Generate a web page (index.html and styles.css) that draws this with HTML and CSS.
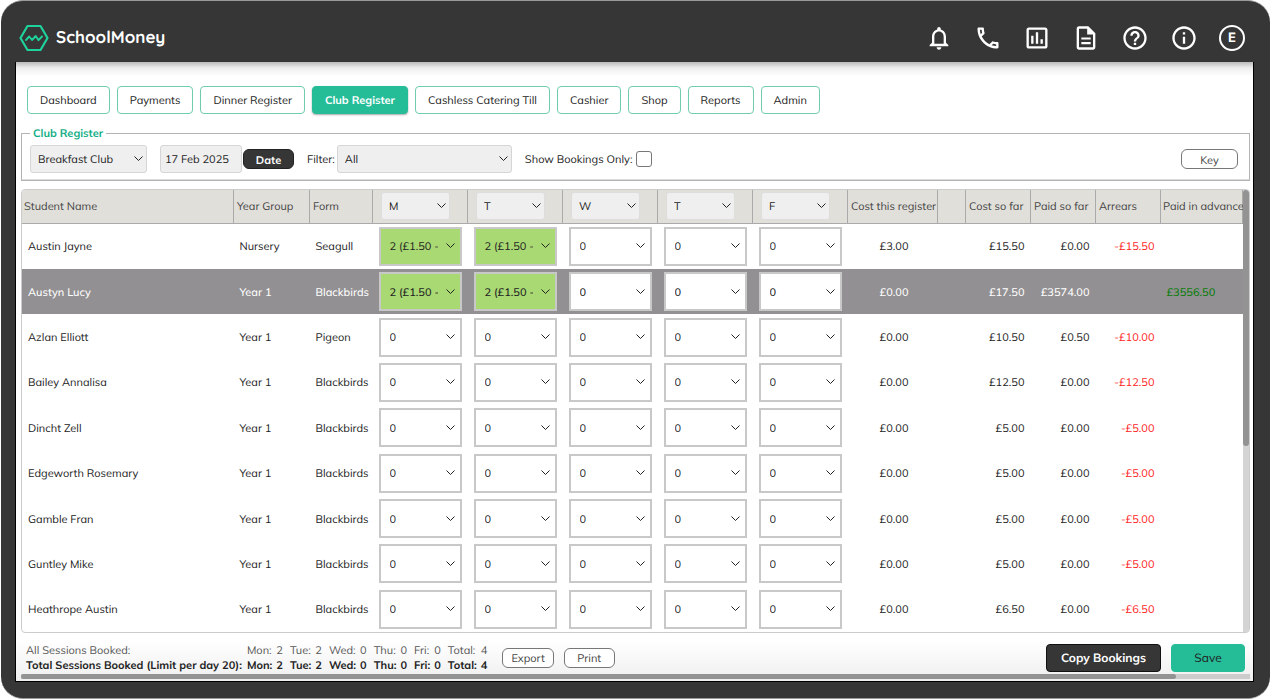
FILE: index.html
```html
<!DOCTYPE html>
<html lang="en">
<head>
    <meta charset="UTF-8">
    <meta name="viewport" content="width=device-width, initial-scale=1.0">
    <title>SchoolMoney - Club Register</title>
    <link rel="stylesheet" href="styles.css">
</head>
<body>
    <div class="frame">
        <header class="topbar">
            <a class="brand" href="#">
                <svg class="brand-logo" viewBox="0 0 30 28" fill="none" stroke="#1fd19b" stroke-linejoin="round" stroke-linecap="round">
                    <path stroke-width="2.2" d="M8.500 2h13l7 12-7 12h-13l-7-12z"/>
                    <path stroke-width="1.900" d="M7 16l3.200-3.500 2.800 3.500 3.700-4 2.800 4.200 3.500-3.700"/>
                </svg>
                <span>SchoolMoney</span>
            </a>
            <nav class="tools" aria-label="Tools">
                <a href="#" aria-label="Notifications">
                    <svg viewBox="0 0 24 24"><path d="M12 22c1.100 0 2-.9 2-2h-4c0 1.100.9 2 2 2zm6-6v-5c0-3.070-1.630-5.640-4.500-6.320V4c0-.83-.67-1.500-1.500-1.500s-1.500.67-1.500 1.500v.68C7.640 5.360 6 7.920 6 11v5l-2 2v1h16v-1l-2-2zm-2 1H8v-6c0-2.480 1.510-4.500 4-4.500s4 2.020 4 4.500v6z"/></svg>
                </a>
                <a href="#" aria-label="Phone">
                    <svg viewBox="0 0 24 24"><path d="M6.540 5c.06.89.21 1.760.45 2.590l-1.200 1.200c-.41-1.200-.67-2.470-.76-3.790h1.510m9.860 12.020c.85.24 1.720.39 2.600.45v1.490c-1.320-.09-2.590-.35-3.800-.75l1.200-1.190M7.500 3H4c-.55 0-1 .45-1 1 0 9.390 7.610 17 17 17 .55 0 1-.45 1-1v-3.490c0-.55-.45-1-1-1-1.240 0-2.450-.2-3.570-.57-.1-.04-.21-.05-.31-.05-.26 0-.51.1-.71.29l-2.200 2.200c-2.830-1.450-5.150-3.760-6.590-6.590l2.200-2.200c.28-.28.36-.67.25-1.020C8.700 6.450 8.500 5.250 8.500 4c0-.55-.45-1-1-1z"/></svg>
                </a>
                <a href="#" aria-label="Statistics">
                    <svg viewBox="0 0 24 24"><path d="M19 3H5c-1.100 0-2 .9-2 2v14c0 1.100.9 2 2 2h14c1.100 0 2-.9 2-2V5c0-1.100-.9-2-2-2zm0 16H5V5h14v14zM7 10h2v7H7zm4-3h2v10h-2zm4 6h2v4h-2z"/></svg>
                </a>
                <a href="#" aria-label="Documents">
                    <svg viewBox="0 0 24 24"><path d="M14 2H6c-1.100 0-2 .9-2 2v16c0 1.100.9 2 2 2h12c1.100 0 2-.9 2-2V8l-6-6zM6 20V4h7v5h5v11H6zM8 11.500h8v1.800H8zM8 15.500h8v1.800H8z"/></svg>
                </a>
                <a href="#" aria-label="Help">
                    <svg viewBox="0 0 24 24"><path d="M11 18h2v-2h-2v2zm1-16C6.480 2 2 6.480 2 12s4.480 10 10 10 10-4.480 10-10S17.520 2 12 2zm0 18c-4.410 0-8-3.590-8-8s3.590-8 8-8 8 3.590 8 8-3.590 8-8 8zm0-14c-2.210 0-4 1.790-4 4h2c0-1.100.9-2 2-2s2 .9 2 2c0 2-3 1.750-3 5h2c0-2.250 3-2.500 3-5 0-2.210-1.790-4-4-4z"/></svg>
                </a>
                <a href="#" aria-label="Information">
                    <svg viewBox="0 0 24 24"><path d="M11 7h2v2h-2zm0 4h2v6h-2zm1-9C6.480 2 2 6.480 2 12s4.480 10 10 10 10-4.480 10-10S17.520 2 12 2zm0 18c-4.410 0-8-3.590-8-8s3.590-8 8-8 8 3.590 8 8-3.590 8-8 8z"/></svg>
                </a>
                <a class="avatar" href="#">E</a>
            </nav>
        </header>

        <main class="page">
            <nav class="tabs" aria-label="Main">
                <a class="tab" href="#">Dashboard</a>
                <a class="tab" href="#">Payments</a>
                <a class="tab" href="#">Dinner Register</a>
                <a class="tab active" href="#">Club Register</a>
                <a class="tab" href="#">Cashless Catering Till</a>
                <a class="tab" href="#">Cashier</a>
                <a class="tab" href="#">Shop</a>
                <a class="tab" href="#">Reports</a>
                <a class="tab" href="#">Admin</a>
            </nav>

            <fieldset class="filters">
                <legend>Club Register</legend>
                <div class="filter-row">
                    <select class="select club" aria-label="Club"><option>Breakfast Club</option></select>
                    <div class="date-group">
                        <input class="date" type="text" aria-label="Register date" value="17 Feb 2025">
                        <button class="pill dark" type="button">Date</button>
                    </div>
                    <div class="filter-group">
                        <label for="filter">Filter:</label>
                        <select class="select filter" id="filter"><option>All</option></select>
                    </div>
                    <div class="check-group">
                        <label for="bookings-only">Show Bookings Only:</label>
                        <input class="check" type="checkbox" id="bookings-only">
                    </div>
                    <button class="pill key" type="button">Key</button>
                </div>
            </fieldset>

            <div class="register">
                <table class="register-table">
                    <colgroup>
                        <col>
                        <col class="col-year">
                        <col class="col-form">
                        <col class="col-day" span="5">
                        <col class="col-cost">
                        <col class="col-blank">
                        <col class="col-money" span="3">
                        <col class="col-advance">
                    </colgroup>
                    <thead>
                        <tr>
                            <th>Student Name</th>
                            <th>Year Group</th>
                            <th>Form</th>
                            <th class="day"><select class="select" aria-label="Monday"><option>M</option></select></th>
                            <th class="day"><select class="select" aria-label="Tuesday"><option>T</option></select></th>
                            <th class="day"><select class="select" aria-label="Wednesday"><option>W</option></select></th>
                            <th class="day"><select class="select" aria-label="Thursday"><option>T</option></select></th>
                            <th class="day"><select class="select" aria-label="Friday"><option>F</option></select></th>
                            <th>Cost this register</th>
                            <th></th>
                            <th>Cost so far</th>
                            <th>Paid so far</th>
                            <th>Arrears</th>
                            <th>Paid in advance</th>
                        </tr>
                    </thead>
                    <tbody id="students"></tbody>
                </table>
                <div class="scroll-y"><div class="thumb"></div></div>
            </div>

            <footer class="summary">
                <table class="sessions">
                    <tr>
                        <th>All Sessions Booked:</th>
                        <td>Mon:</td><td>2</td>
                        <td>Tue:</td><td>2</td>
                        <td>Wed:</td><td>0</td>
                        <td>Thu:</td><td>0</td>
                        <td>Fri:</td><td>0</td>
                        <td>Total:</td><td>4</td>
                    </tr>
                    <tr class="total">
                        <th>Total Sessions Booked (Limit per day 20):</th>
                        <td>Mon:</td><td>2</td>
                        <td>Tue:</td><td>2</td>
                        <td>Wed:</td><td>0</td>
                        <td>Thu:</td><td>0</td>
                        <td>Fri:</td><td>0</td>
                        <td>Total:</td><td>4</td>
                    </tr>
                </table>
                <button class="pill" type="button">Export</button>
                <button class="pill" type="button">Print</button>
                <div class="actions">
                    <button class="action dark" type="button">Copy Bookings</button>
                    <button class="action save" type="button">Save</button>
                </div>
            </footer>
            <div class="scroll-x"><div class="thumb"></div></div>
        </main>
    </div>

    <script src="script.js"></script>
</body>
</html>
```

FILE: styles.css
```css
* {
    box-sizing: border-box;
}

body {
    margin: 0;
    background-color: #fff;
    color: #222;
    font-family: Mulish, Muli, "Open Sans", sans-serif;
    font-size: 11px;
    line-height: 14px;
    text-rendering: geometricPrecision;
}

button,
input,
select {
    margin: 0;
    font: inherit;
    color: inherit;
    text-rendering: inherit;
}

a {
    color: inherit;
    text-decoration: none;
}

/* Frame */
.frame {
    display: flex;
    flex-direction: column;
    height: calc(100vh - 1px);
    margin: 0 1px;
    padding: 0 16px 16px 14px;
    border: 1px solid #999;
    border-width: 1px 0 1px 0;
    border-radius: 22px;
    background-color: #363636;
}

.topbar {
    display: flex;
    justify-content: space-between;
    align-items: center;
    height: 61px;
    padding: 13px 9px 0 4px;
    color: #fff;
}

.brand {
    display: flex;
    align-items: center;
    gap: 7px;
    font-family: Quicksand, Lato, sans-serif;
    font-size: 17px;
    font-weight: 700;
    line-height: 24px;
}

.brand-logo {
    width: 30px;
    height: 28px;
}

.tools {
    display: flex;
    align-items: center;
    gap: 21px;
}

.tools svg {
    display: block;
    width: 28px;
    height: 28px;
    fill: #fff;
}

.avatar {
    width: 26px;
    height: 26px;
    border: 2px solid #fff;
    border-radius: 50%;
    font-family: Inter, sans-serif;
    font-size: 13px;
    font-weight: 700;
    line-height: 22px;
    text-align: center;
}

.page {
    display: flex;
    flex-direction: column;
    flex: 1;
    min-height: 0;
    padding: 24px 3px 2px 5px;
    border: 1px solid #000;
    border-top: none;
    background: linear-gradient(#bbb 0, #eee 6px, #fff 14px, #fff calc(100% - 40px), #efefef);
}

/* Tabs */
.tabs {
    display: flex;
    gap: 7px;
    padding-left: 6px;
}

.tab {
    padding: 6px 12px;
    border: 1px solid #6fcdae;
    border-radius: 4px;
    background-color: #fff;
}

.tab.active {
    border-color: #24bd98;
    background-color: #24bd98;
    box-shadow: 0 1px 2px rgba(0, 0, 0, 0.35);
    color: #fff;
    font-weight: 700;
}

/* Filters */
.filters {
    min-width: 0;
    margin: 12px 0 0;
    padding: 0 11px 7px 8px;
    border: 1px solid #b4b4b4;
    box-shadow: inset 0 -1px 0 #ddd;
}

.filters legend {
    padding: 0 3px;
    color: #14ae87;
    font-weight: 700;
}

.filter-row {
    display: flex;
    align-items: center;
    gap: 13px;
    padding-top: 5px;
}

.select {
    height: 28px;
    padding: 0 22px 0 7px;
    border: 1px solid #d6d6d6;
    border-radius: 3px;
    appearance: none;
    background: #efefef url("data:image/svg+xml,%3Csvg xmlns='http://www.w3.org/2000/svg' width='9' height='6' fill='none' stroke='%23222'%3E%3Cpath d='M.5.500 4.500 4.500 8.500.5'/%3E%3C/svg%3E") no-repeat right 3px center;
}

.select.club {
    width: 117px;
}

.select.filter {
    width: 175px;
}

.date-group,
.filter-group,
.check-group {
    display: flex;
    align-items: center;
}

.date-group {
    gap: 1px;
}

.filter-group {
    gap: 2px;
}

.check-group {
    gap: 4px;
}

.date {
    width: 82px;
    height: 28px;
    padding: 0 4px;
    border: 1px solid #d6d6d6;
    border-radius: 3px;
    background-color: #efefef;
}

.check {
    width: 16px;
    height: 16px;
    border: 1px solid #777;
    border-radius: 3px;
    appearance: none;
    background-color: #fff;
}

.pill {
    min-width: 51px;
    height: 20px;
    padding: 1px 8px 0;
    border: 1px solid #777;
    border-radius: 6px;
    background-color: #fff;
    color: #444;
}

.pill.dark {
    border-color: #222;
    background-color: #363636;
    color: #fff;
    font-weight: 700;
}

.pill.key {
    min-width: 57px;
    margin-left: auto;
}

/* Register */
.register {
    display: flex;
    flex: 1;
    min-height: 0;
    margin-top: 8px;
    border: 1px solid #ccc;
    border-radius: 4px;
    overflow: hidden;
    background-color: #fff;
}

.register-table {
    width: 100%;
    height: 100%;
    border-collapse: collapse;
    table-layout: fixed;
}

.col-year {
    width: 76px;
}

.col-form {
    width: 63px;
}

.col-day {
    width: 95px;
}

.col-cost {
    width: 90px;
}

.col-blank {
    width: 28px;
}

.col-money {
    width: 65px;
}

.col-advance {
    width: 82px;
}

.register-table th {
    height: 33px;
    padding: 0 0 0 3px;
    border-right: 1px solid #aaa;
    border-bottom: 1px solid #aaa;
    background-color: #e1dfda;
    color: #444;
    font-weight: 400;
    text-align: left;
    white-space: nowrap;
}

.register-table th:first-child,
.register-table th:last-child {
    padding-left: 2px;
}

.register-table th.day {
    padding-left: 8px;
}

.day .select {
    width: 69px;
    border-color: #ddd;
    color: #222;
}

.register-table td {
    padding: 0 6px;
    white-space: nowrap;
}

.register-table td.money {
    text-align: right;
}

.register-table td.cost,
.register-table td.advance {
    padding-right: 29px;
}

.booking {
    display: block;
    width: 83px;
    height: 39px;
    padding: 0 22px 0 9px;
    border: 2px solid #c8c8c8;
    border-radius: 0;
    background-color: #fff;
    background-position: right 5px center;
    color: #222;
}

.booking.booked {
    background-color: #a9d973;
}

.selected td {
    background-color: #929092;
    color: #fff;
    font-weight: 500;
}

.register-table .owed {
    color: #f22;
}

.register-table .credit {
    color: #0a7d0a;
}

/* Scrollbars */
.scroll-y {
    flex: none;
    width: 6px;
    background-color: #d4d4d4;
}

.scroll-y .thumb {
    height: 58%;
    border-radius: 3px;
    background-color: #939393;
}

.scroll-x {
    height: 5px;
    background-color: #ccc;
}

.scroll-x .thumb {
    width: 94%;
    height: 5px;
    border-radius: 3px;
    background-color: #939393;
}

/* Summary */
.summary {
    display: flex;
    align-items: center;
    gap: 10px;
    height: 41px;
    padding: 8px 5px 0;
}

.sessions {
    border-collapse: collapse;
    color: #555;
}

.sessions th,
.sessions td {
    padding: 0 4px 0 0;
    font-weight: inherit;
    line-height: 15px;
    text-align: left;
    white-space: nowrap;
}

.sessions th {
    padding-right: 5px;
}

.sessions td:nth-child(odd) {
    padding-right: 7px;
}

.sessions td:last-child {
    padding-right: 5px;
}

.sessions .total {
    color: #222;
    font-weight: 700;
}

.actions {
    display: flex;
    gap: 10px;
    margin-left: auto;
}

.action {
    height: 28px;
    padding: 0 14px;
    border: 1px solid #24bd98;
    border-radius: 4px;
    font-size: 12px;
}

.action.dark {
    border-color: #111;
    background-color: #363636;
    color: #fff;
    font-weight: 700;
}

.action.save {
    min-width: 74px;
    background-color: #24bd98;
}
```

FILE: script.js
```js
const booked = '2 (£1.50 -';

const students = [
    { name: 'Austin Jayne', year: 'Nursery', form: 'Seagull', days: [booked, booked, 0, 0, 0], cost: '£3.00', total: '£15.50', paid: '£0.00', arrears: '-£15.50' },
    { name: 'Austyn Lucy', year: 'Year 1', form: 'Blackbirds', days: [booked, booked, 0, 0, 0], cost: '£0.00', total: '£17.50', paid: '£3574.00', advance: '£3556.50', selected: true },
    { name: 'Azlan Elliott', year: 'Year 1', form: 'Pigeon', days: [0, 0, 0, 0, 0], cost: '£0.00', total: '£10.50', paid: '£0.50', arrears: '-£10.00' },
    { name: 'Bailey Annalisa', year: 'Year 1', form: 'Blackbirds', days: [0, 0, 0, 0, 0], cost: '£0.00', total: '£12.50', paid: '£0.00', arrears: '-£12.50' },
    { name: 'Dincht Zell', year: 'Year 1', form: 'Blackbirds', days: [0, 0, 0, 0, 0], cost: '£0.00', total: '£5.00', paid: '£0.00', arrears: '-£5.00' },
    { name: 'Edgeworth Rosemary', year: 'Year 1', form: 'Blackbirds', days: [0, 0, 0, 0, 0], cost: '£0.00', total: '£5.00', paid: '£0.00', arrears: '-£5.00' },
    { name: 'Gamble Fran', year: 'Year 1', form: 'Blackbirds', days: [0, 0, 0, 0, 0], cost: '£0.00', total: '£5.00', paid: '£0.00', arrears: '-£5.00' },
    { name: 'Guntley Mike', year: 'Year 1', form: 'Blackbirds', days: [0, 0, 0, 0, 0], cost: '£0.00', total: '£5.00', paid: '£0.00', arrears: '-£5.00' },
    { name: 'Heathrope Austin', year: 'Year 1', form: 'Blackbirds', days: [0, 0, 0, 0, 0], cost: '£0.00', total: '£6.50', paid: '£0.00', arrears: '-£6.50' }
];

const dayNames = ['Monday', 'Tuesday', 'Wednesday', 'Thursday', 'Friday'];

function bookingCell(student, value, index) {
    const state = value ? ' booked' : '';
    return `<td><select class="select booking${state}" aria-label="${student.name}, ${dayNames[index]}"><option>${value}</option></select></td>`;
}

function studentRow(student) {
    return `
        <tr class="${student.selected ? 'selected' : ''}">
            <td>${student.name}</td>
            <td>${student.year}</td>
            <td>${student.form}</td>
            ${student.days.map((value, index) => bookingCell(student, value, index)).join('')}
            <td class="money cost">${student.cost}</td>
            <td></td>
            <td class="money">${student.total}</td>
            <td class="money">${student.paid}</td>
            <td class="money owed">${student.arrears || ''}</td>
            <td class="money advance credit">${student.advance || ''}</td>
        </tr>`;
}

document.getElementById('students').innerHTML = students.map(studentRow).join('');
```
